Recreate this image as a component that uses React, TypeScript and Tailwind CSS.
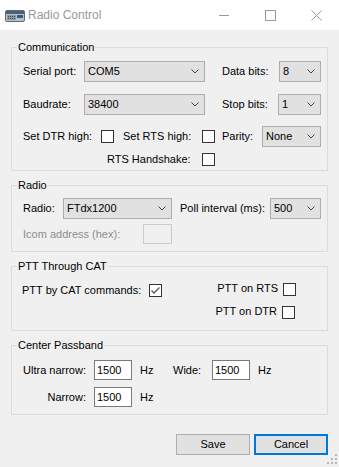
import type { ReactNode } from "react";

const Chevron = () => (
  <svg width="8" height="5" viewBox="0 0 8 5" className="shrink-0">
    <polyline points="0.5,0.5 4,4 7.5,0.5" fill="none" stroke="#444" strokeWidth="1" />
  </svg>
);

const Combo = ({ value, w }: { value: string; w: string }) => (
  <div className={`${w} h-[21px] flex items-center justify-between border border-[#adadad] bg-[#e1e1e1] pl-[3px] pr-[5px]`}>
    <span>{value}</span>
    <Chevron />
  </div>
);

const Check = ({ checked = false, className = "" }: { checked?: boolean; className?: string }) => (
  <span className={`w-[13px] h-[13px] shrink-0 border border-[#333] bg-white flex items-center justify-center ${className}`}>
    {checked && (
      <svg width="11" height="11" viewBox="0 0 11 11">
        <polyline points="1.5,5.5 4,8 9.5,2.5" fill="none" stroke="#5a5a5a" strokeWidth="1.4" />
      </svg>
    )}
  </span>
);

const TextBox = ({ value, w, disabled = false }: { value?: string; w: string; disabled?: boolean }) => (
  <div
    className={`${w} h-[20px] flex items-center pl-[2px] border ${
      disabled ? "border-[#cccccc] bg-[#f0f0f0]" : "border-[#7a7a7a] bg-white"
    }`}
  >
    {value}
  </div>
);

const Group = ({ title, children }: { title: string; children: ReactNode }) => (
  <fieldset className="mx-[11px] border border-[#dcdcdc]">
    <legend className="ml-[5px] px-[1px] leading-[13px]">{title}</legend>
    {children}
  </fieldset>
);

const RadioIcon = () => (
  <svg width="20" height="13" viewBox="0 0 20 13">
    <rect x="0.5" y="1.5" width="19" height="11" rx="1.5" fill="#b9c0c8" stroke="#5d6b78" />
    <rect x="1" y="2" width="18" height="3" fill="#4d6275" />
    <rect x="2" y="6" width="9" height="5" fill="#8d99a5" />
    <rect x="12" y="6" width="6" height="3" fill="#2f5d8a" />
    <rect x="3" y="7" width="1" height="1" fill="#3b4650" />
    <rect x="5" y="7" width="1" height="1" fill="#3b4650" />
    <rect x="7" y="7" width="1" height="1" fill="#3b4650" />
    <rect x="9" y="7" width="1" height="1" fill="#3b4650" />
    <rect x="3" y="9" width="1" height="1" fill="#3b4650" />
    <rect x="5" y="9" width="1" height="1" fill="#3b4650" />
    <rect x="7" y="9" width="1" height="1" fill="#3b4650" />
    <rect x="9" y="9" width="1" height="1" fill="#3b4650" />
  </svg>
);

export default function App() {
  return (
    <div className="relative w-[339px] h-[467px] overflow-hidden bg-[#f0f0f0] text-[11px] leading-[13px] text-black font-['Liberation_Sans',Arial,sans-serif]">
      {/* Title bar */}
      <div className="h-[30px] bg-white flex items-center">
        <div className="ml-[5px] mt-[1px]">
          <RadioIcon />
        </div>
        <span className="ml-[3px] text-[12px] text-[#999999]">Radio Control</span>
        <div className="ml-auto flex h-full">
          <div className="w-[46px] flex items-center justify-center">
            <svg width="10" height="10" viewBox="0 0 10 10">
              <line x1="0" y1="5.5" x2="10" y2="5.5" stroke="#999" />
            </svg>
          </div>
          <div className="w-[46px] flex items-center justify-center">
            <svg width="11" height="11" viewBox="0 0 11 11">
              <rect x="0.5" y="0.5" width="10" height="10" fill="none" stroke="#999" />
            </svg>
          </div>
          <div className="w-[46px] flex items-center justify-center">
            <svg width="11" height="11" viewBox="0 0 11 11">
              <line x1="0.5" y1="0.5" x2="10.5" y2="10.5" stroke="#999" />
              <line x1="10.5" y1="0.5" x2="0.5" y2="10.5" stroke="#999" />
            </svg>
          </div>
        </div>
      </div>

      <div className="mt-[11px]">
        {/* Communication */}
        <Group title="Communication">
          <div className="pl-[11px] pt-[7px] pb-[4px]">
            <div className="flex items-center h-[21px]">
              <span className="w-[61px]">Serial port:</span>
              <Combo value="COM5" w="w-[121px]" />
              <span className="ml-[17px] w-[57px]">Data bits:</span>
              <Combo value="8" w="w-[42px]" />
            </div>
            <div className="flex items-center h-[21px] mt-[12px]">
              <span className="w-[61px]">Baudrate:</span>
              <Combo value="38400" w="w-[121px]" />
              <span className="ml-[17px] w-[56px]">Stop bits:</span>
              <Combo value="1" w="w-[43px]" />
            </div>
            <div className="flex items-center h-[21px] mt-[11px]">
              <span className="w-[78px]">Set DTR high:</span>
              <Check />
              <span className="ml-[9px] w-[79px]">Set RTS high:</span>
              <Check />
              <span className="ml-[7px] w-[40px]">Parity:</span>
              <Combo value="None" w="w-[59px]" />
            </div>
            <div className="flex items-center h-[13px] mt-[6px]">
              <span className="ml-[84px] w-[95px]">RTS Handshake:</span>
              <Check />
            </div>
          </div>
        </Group>

        {/* Radio */}
        <div className="mt-[8px]">
          <Group title="Radio">
            <div className="pl-[11px] pt-[6px] pb-[7px]">
              <div className="flex items-center h-[21px]">
                <span className="w-[40px]">Radio:</span>
                <Combo value="FTdx1200" w="w-[109px]" />
                <span className="ml-[8px] w-[90px]">Poll interval (ms):</span>
                <Combo value="500" w="w-[51px]" />
              </div>
              <div className="flex items-center h-[20px] mt-[5px]">
                <span className="w-[120px] text-[#8d8d8d]">Icom address (hex):</span>
                <TextBox w="w-[29px]" disabled />
              </div>
            </div>
          </Group>
        </div>

        {/* PTT Through CAT */}
        <div className="mt-[8px]">
          <Group title="PTT Through CAT">
            <div className="flex justify-between pl-[10px] pr-[31px] pt-[10px] pb-[11px]">
              <div className="flex items-center h-[13px] mt-[1px]">
                <span className="w-[127px]">PTT by CAT commands:</span>
                <Check checked />
              </div>
              <div className="flex flex-col items-end">
                <div className="flex items-center h-[13px]">
                  <span className="mr-[5px] -mt-[2px]">PTT on RTS</span>
                  <Check />
                </div>
                <div className="flex items-center h-[13px] mt-[10px] mr-[1px]">
                  <span className="mr-[5px] -mt-[2px]">PTT on DTR</span>
                  <Check />
                </div>
              </div>
            </div>
          </Group>
        </div>

        {/* Center Passband */}
        <div className="mt-[8px]">
          <Group title="Center Passband">
            <div className="pl-[11px] pt-[8px] pb-[7px]">
              <div className="flex items-center h-[20px]">
                <span className="w-[71px] pr-[8px] text-right">Ultra narrow:</span>
                <TextBox value="1500" w="w-[38px]" />
                <span className="ml-[8px] w-[33px]">Hz</span>
                <span className="w-[39px]">Wide:</span>
                <TextBox value="1500" w="w-[38px]" />
                <span className="ml-[8px]">Hz</span>
              </div>
              <div className="flex items-center h-[20px] mt-[7px]">
                <span className="w-[71px] pr-[8px] text-right">Narrow:</span>
                <TextBox value="1500" w="w-[38px]" />
                <span className="ml-[8px]">Hz</span>
              </div>
            </div>
          </Group>
        </div>

        {/* Buttons */}
        <div className="flex justify-end gap-[4px] pr-[11px] mt-[19px]">
          <div className="w-[74px] h-[21px] flex items-center justify-center border border-[#adadad] bg-[#e1e1e1]">
            Save
          </div>
          <div className="w-[74px] h-[21px] flex items-center justify-center border-2 border-[#0078d7] bg-[#e1e1e1]">
            Cancel
          </div>
        </div>
      </div>

      {/* Resize grip */}
      <svg width="11" height="11" viewBox="0 0 11 11" className="absolute right-[1px] bottom-[2px]">
        <rect x="8" y="0" width="2" height="2" fill="#b8b8b8" />
        <rect x="4" y="4" width="2" height="2" fill="#b8b8b8" />
        <rect x="8" y="4" width="2" height="2" fill="#b8b8b8" />
        <rect x="0" y="8" width="2" height="2" fill="#b8b8b8" />
        <rect x="4" y="8" width="2" height="2" fill="#b8b8b8" />
        <rect x="8" y="8" width="2" height="2" fill="#b8b8b8" />
      </svg>
    </div>
  );
}
